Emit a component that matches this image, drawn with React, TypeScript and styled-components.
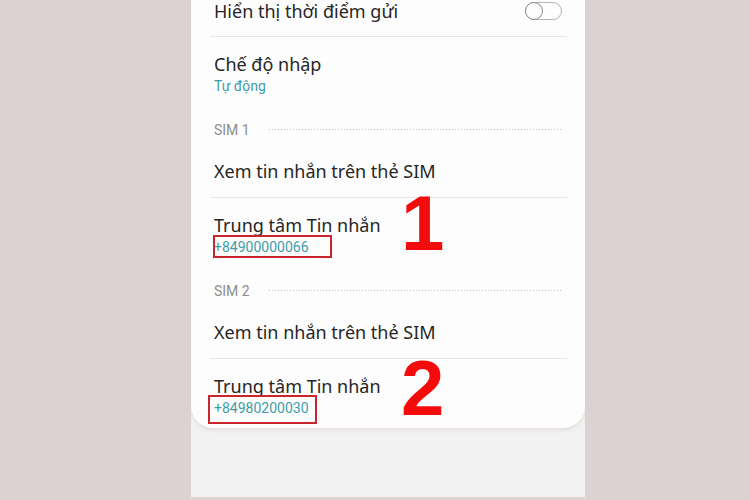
import React from "react";
import styled, { createGlobalStyle } from "styled-components";

const GlobalStyle = createGlobalStyle`
  html, body {
    margin: 0;
    padding: 0;
    background: #ddd2d2;
  }
  body {
    font-family: Roboto, "Noto Sans", "Liberation Sans", sans-serif;
    -webkit-font-smoothing: antialiased;
  }
`;

const Stage = styled.div`
  width: 750px;
  height: 500px;
  display: flex;
  padding-left: 191px;
  box-sizing: border-box;
  overflow: hidden;
`;

const Screen = styled.div`
  width: 394px;
  height: 497px;
  background: #f2f2f2;
  display: flex;
  flex-direction: column;
  overflow: hidden;
`;

const Card = styled.div`
  position: relative;
  margin-top: -14px;
  background: #fdfdfd;
  border-radius: 0 0 22px 22px;
  box-shadow: 0 2px 4px rgba(170, 130, 130, 0.18);
  display: flex;
  flex-direction: column;
`;

const SwitchRow = styled.div`
  height: 50px;
  padding: 0 23px;
  display: flex;
  align-items: center;
  justify-content: space-between;
`;

const Title = styled.div`
  font-family: "Noto Sans", Roboto, sans-serif;
  font-size: 18px;
  line-height: 24px;
  color: #262626;
`;

const Sub = styled.div`
  font-size: 14px;
  line-height: 20px;
  color: #3f9da9;
`;

const TwoLineRow = styled.div<{ $end?: boolean }>`
  padding: 15px 23px ${(p) => (p.$end ? 10 : 14)}px;
  display: flex;
  flex-direction: column;
  align-items: flex-start;
`;

const SingleRow = styled.div`
  padding: 9px 23px 14px;
`;

const Divider = styled.div`
  height: 1px;
  margin: 0 18px 0 19px;
  background: #e6e6e6;
`;

const SectionHeader = styled.div`
  height: 40px;
  padding: 0 22px 0 23px;
  display: flex;
  align-items: center;
  gap: 19px;
`;

const SectionLabel = styled.span`
  font-size: 14px;
  color: #8e8e8e;
`;

const DottedLine = styled.span`
  flex: 1;
  height: 1px;
  margin-top: -2px;
  background-image: linear-gradient(to right, #c2c2c2 1px, transparent 1px);
  background-size: 3px 1px;
`;

const Switch = styled.div`
  position: relative;
  width: 37px;
  height: 18px;
  border: 1.5px solid #b4b4b4;
  border-radius: 10px;
  box-sizing: border-box;
  &::after {
    content: "";
    position: absolute;
    left: -1.5px;
    top: -1.5px;
    width: 18px;
    height: 18px;
    box-sizing: border-box;
    border-radius: 50%;
    border: 1.5px solid #8a8a8a;
    background: #fdfdfd;
  }
`;

const Number = styled.span`
  position: relative;
  font-size: 14px;
  line-height: 20px;
  color: #3f9da9;
`;

const Highlight = styled.span<{ $l: number; $t: number; $w: number; $h: number }>`
  position: absolute;
  left: ${(p) => p.$l}px;
  top: ${(p) => p.$t}px;
  width: ${(p) => p.$w}px;
  height: ${(p) => p.$h}px;
  border: 2px solid #c8252d;
  box-sizing: border-box;
`;

const Marker = styled.span<{ $l: number; $t: number }>`
  position: absolute;
  left: ${(p) => p.$l}px;
  top: ${(p) => p.$t}px;
  font-family: "Liberation Sans", Arial, sans-serif;
  font-weight: 700;
  font-size: 78px;
  line-height: 1;
  color: #f40b0b;
  text-shadow: 0 0 1px rgba(255, 255, 255, 0.8);
`;

type Sim = {
  label: string;
  number: string;
  box: { l: number; t: number; w: number; h: number };
};

const sims: Sim[] = [
  { label: "SIM 1", number: "+84900000066", box: { l: -1, t: -2, w: 119, h: 23 } },
  { label: "SIM 2", number: "+84980200030", box: { l: -6, t: -3, w: 109, h: 29 } },
];

export default function App() {
  return (
    <>
      <GlobalStyle />
      <Stage>
        <Screen>
          <Card>
            <SwitchRow>
              <Title>Hiển thị thời điểm gửi</Title>
              <Switch />
            </SwitchRow>
            <Divider />
            <TwoLineRow>
              <Title>Chế độ nhập</Title>
              <Sub>Tự động</Sub>
            </TwoLineRow>
            {sims.map((sim, i) => (
              <React.Fragment key={sim.label}>
                <SectionHeader>
                  <SectionLabel>{sim.label}</SectionLabel>
                  <DottedLine />
                </SectionHeader>
                <SingleRow>
                  <Title>Xem tin nhắn trên thẻ SIM</Title>
                </SingleRow>
                <Divider />
                <TwoLineRow $end={i === sims.length - 1}>
                  <Title>Trung tâm Tin nhắn</Title>
                  <Number>
                    {sim.number}
                    <Highlight $l={sim.box.l} $t={sim.box.t} $w={sim.box.w} $h={sim.box.h} />
                  </Number>
                </TwoLineRow>
              </React.Fragment>
            ))}
            <Marker $l={210} $t={198}>1</Marker>
            <Marker $l={210} $t={363}>2</Marker>
          </Card>
        </Screen>
      </Stage>
    </>
  );
}
